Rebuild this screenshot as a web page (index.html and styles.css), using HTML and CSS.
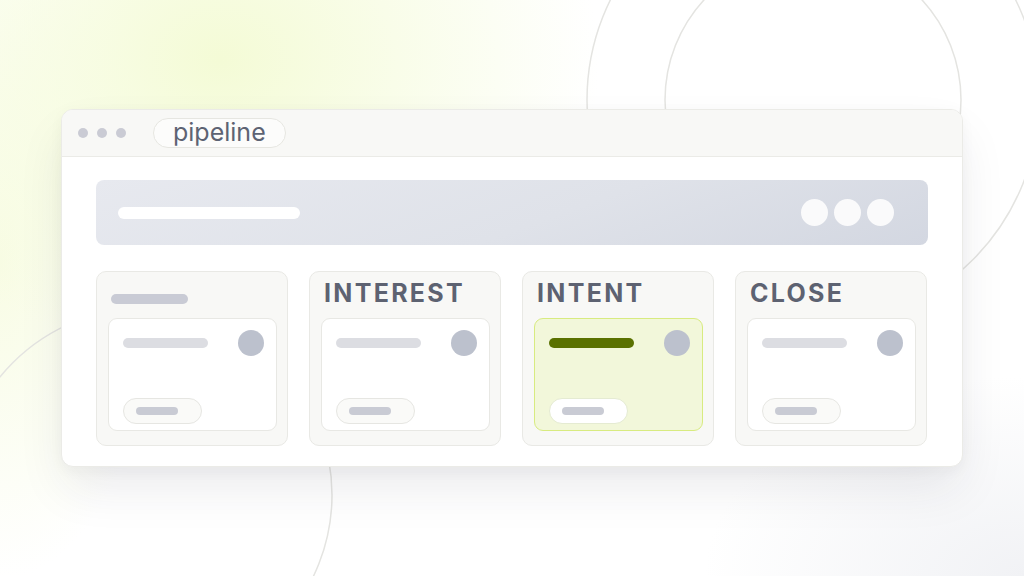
FILE: index.html
```html
<!DOCTYPE html>
<html lang="en">
<head>
<meta charset="utf-8">
<title>pipeline</title>
<link rel="stylesheet" href="styles.css">
</head>
<body>
<svg class="bg-rings" width="1024" height="576" viewBox="0 0 1024 576" aria-hidden="true">
  <circle cx="813" cy="100" r="226" />
  <circle cx="813" cy="100" r="148" />
  <circle cx="145" cy="495" r="187" />
</svg>
<main class="stage">
  <section class="window">
    <header class="titlebar">
      <div class="dots"><span></span><span></span><span></span></div>
      <div class="tab">pipeline</div>
    </header>
    <div class="content">
      <div class="banner">
        <div class="banner-bar"></div>
        <div class="banner-dots"><span></span><span></span><span></span></div>
      </div>
      <div class="board">
        <div class="col">
          <div class="col-head"><div class="head-bar"></div></div>
          <div class="card">
            <div class="card-top"><div class="line"></div><div class="avatar"></div></div>
            <div class="chip"><div class="chip-bar"></div></div>
          </div>
        </div>
        <div class="col">
          <div class="col-head"><h2>INTEREST</h2></div>
          <div class="card">
            <div class="card-top"><div class="line"></div><div class="avatar"></div></div>
            <div class="chip"><div class="chip-bar"></div></div>
          </div>
        </div>
        <div class="col">
          <div class="col-head"><h2>INTENT</h2></div>
          <div class="card card-active">
            <div class="card-top"><div class="line"></div><div class="avatar"></div></div>
            <div class="chip"><div class="chip-bar"></div></div>
          </div>
        </div>
        <div class="col">
          <div class="col-head"><h2>CLOSE</h2></div>
          <div class="card">
            <div class="card-top"><div class="line"></div><div class="avatar"></div></div>
            <div class="chip"><div class="chip-bar"></div></div>
          </div>
        </div>
      </div>
    </div>
  </section>
</main>
</body>
</html>
```
FILE: styles.css
```css
* { box-sizing: border-box; }

html, body {
  margin: 0;
  width: 1024px;
  height: 576px;
  overflow: hidden;
}

body {
  position: relative;
  font-family: Inter, "Liberation Sans", Arial, sans-serif;
  background:
    radial-gradient(ellipse 380px 300px at 220px 60px, rgba(244, 251, 214, 1) 0%, rgba(246, 252, 222, 0.75) 40%, rgba(255, 255, 255, 0) 100%),
    radial-gradient(ellipse 160px 320px at 0px 260px, rgba(248, 252, 228, 1) 0%, rgba(255, 255, 255, 0) 100%),
    radial-gradient(ellipse 320px 200px at 1024px 576px, rgba(241, 242, 245, 1) 0%, rgba(255, 255, 255, 0) 100%),
    #ffffff;
}

.bg-rings {
  position: absolute;
  left: 0;
  top: 0;
  z-index: 0;
}

.bg-rings circle {
  fill: none;
  stroke: #e4e4e1;
  stroke-width: 1.5;
}

.stage {
  position: relative;
  z-index: 1;
  padding: 109px 0 0 61px;
}

.window {
  width: 902px;
  height: 358px;
  background: #ffffff;
  border: 1px solid #ebebe7;
  border-radius: 12px;
  overflow: hidden;
  box-shadow: 0 24px 50px -6px rgba(40, 42, 55, 0.10), 0 4px 14px rgba(40, 42, 55, 0.04);
}

.titlebar {
  height: 47px;
  background: #f8f8f6;
  border-bottom: 1px solid #ebebe7;
  display: flex;
  align-items: center;
  padding-left: 16px;
}

.dots {
  display: flex;
  gap: 9px;
}

.dots span {
  width: 10px;
  height: 10px;
  border-radius: 50%;
  background: #cacbd4;
}

.tab {
  margin-left: 27px;
  height: 30px;
  padding: 0 19px 2px 19px;
  border: 1.5px solid #e6e6e1;
  border-radius: 15px;
  background: #fcfcfb;
  display: flex;
  align-items: center;
  font-size: 25px;
  color: #5d6373;
  line-height: 1;
}

.content {
  padding: 23px 34px 20px 34px;
}

.banner {
  height: 65px;
  border-radius: 8px;
  background: linear-gradient(160deg, #e7e9ef 0%, #dfe2e9 55%, #d3d7e1 100%);
  display: flex;
  align-items: center;
  justify-content: space-between;
  padding: 0 34px 0 22px;
}

.banner-bar {
  width: 182px;
  height: 12px;
  border-radius: 6px;
  background: #ffffff;
}

.banner-dots {
  display: flex;
  gap: 6px;
}

.banner-dots span {
  width: 27px;
  height: 27px;
  border-radius: 50%;
  background: #fafafb;
}

.board {
  margin-top: 26px;
  display: grid;
  grid-template-columns: repeat(4, 192px);
  gap: 21px;
}

.col {
  height: 175px;
  background: #f8f8f6;
  border: 1px solid #e9e9e5;
  border-radius: 10px;
  padding: 0 10px 14px 11px;
  display: flex;
  flex-direction: column;
}

.col-head {
  height: 46px;
  padding: 6px 0 0 3px;
}

.col-head h2 {
  margin: 0;
  font-size: 25px;
  line-height: 30px;
  font-weight: 700;
  letter-spacing: 2.3px;
  color: #5d6271;
}

.head-bar {
  margin-top: 16px;
  width: 77px;
  height: 10px;
  border-radius: 5px;
  background: #c9cbd5;
}

.card {
  flex: 1;
  background: #ffffff;
  border: 1px solid #e8e8e4;
  border-radius: 9px;
  padding: 11px 12px 6px 14px;
  display: flex;
  flex-direction: column;
  justify-content: space-between;
}

.card-top {
  display: flex;
  align-items: center;
  justify-content: space-between;
}

.line {
  width: 85px;
  height: 10px;
  border-radius: 5px;
  background: #dcdde2;
}

.avatar {
  width: 26px;
  height: 26px;
  border-radius: 50%;
  background: #bcc1cd;
}

.chip {
  width: 79px;
  height: 26px;
  border: 1px solid #e6e6e2;
  border-radius: 13px;
  background: #fafaf8;
  display: flex;
  align-items: center;
  padding-left: 12px;
}

.chip-bar {
  width: 42px;
  height: 8px;
  border-radius: 4px;
  background: #c9cbd4;
}

.card-active {
  background: #f2f7da;
  border: 1.5px solid #d8eb80;
}

.card-active .line {
  background: #5a7100;
}

.card-active .chip {
  background: #ffffff;
  border-color: #e5ebd2;
}
```
